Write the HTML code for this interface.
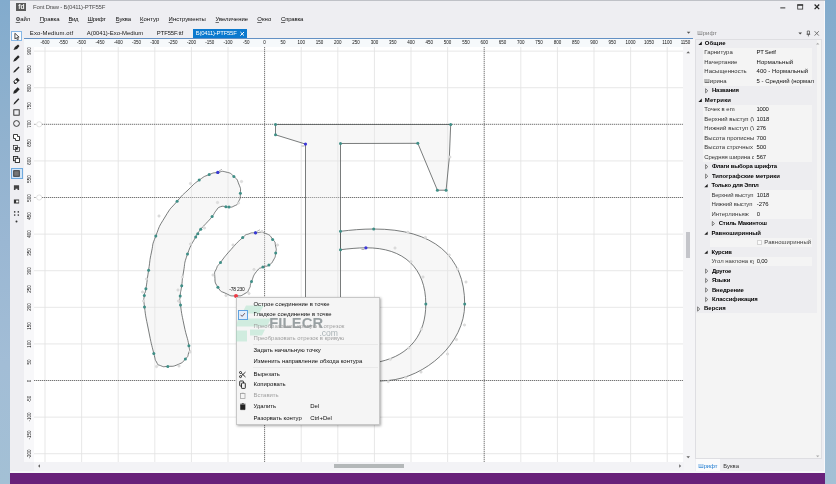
<!DOCTYPE html><html lang="ru"><head><meta charset="utf-8"><title>Font Draw - Б(0411)-PTF55F</title><style>
html,body{margin:0;padding:0}
body{width:836px;height:484px;overflow:hidden;position:relative;background:linear-gradient(to bottom,#82abcd 0%,#8fb1ce 25%,#9ab7d3 50%,#a2bdd6 75%,#a3c0d5 100%);font-family:"Liberation Sans", sans-serif;}
#win{position:absolute;left:10px;top:1px;width:815px;height:483px;background:#eeeef2;overflow:hidden}
.abs,.t,.ti{position:absolute}
.t{white-space:nowrap;line-height:1;}
#all{position:absolute;left:0;top:0;width:836px;height:484px;will-change:transform}
.t u{text-decoration-thickness:0.5px;text-underline-offset:0.5px;text-decoration-color:rgba(0,0,0,0.55)}
#cv{position:absolute;left:34px;top:47px}
</style></head><body>
<div id="all">
<div class="abs" style="left:10px;top:0;width:815px;height:1px;background:#bfc1c7"></div>
<div class="abs" style="left:10px;top:1px;width:815px;height:483px;background:#eeeef2"></div>
<div class="abs" style="left:823.5px;top:1px;width:1.5px;height:472px;background:#f8f8fb"></div>
<div class="abs" style="left:16.4px;top:3.2px;width:9.6px;height:7.5px;background:#5a5a5a"></div>
<div class="t" style="left:18.3px;top:3.6px;font-size:6.6px;font-weight:bold;color:#f4f4f4;letter-spacing:-0.1px">fd</div>
<svg class="abs" style="left:776px;top:1px" width="48" height="14" viewBox="776 1 48 14"><path d="M780.3 7.9h5" stroke="#333" stroke-width="1"/><rect x="797.7" y="4.9" width="5" height="4.2" fill="none" stroke="#333" stroke-width="0.8"/><path d="M797.3 5h5.8" stroke="#333" stroke-width="1.4"/><path d="M814.6 4.5l4.6 4.6m0 -4.6l-4.6 4.6" stroke="#222" stroke-width="1.2"/></svg>
<div class="abs" style="left:193px;top:29.2px;width:54.3px;height:9.3px;background:#0b79ce"></div>
<div class="abs" style="left:23.6px;top:37.9px;width:669.4px;height:0.9px;background:#6390c4"></div>
<svg class="abs" style="left:238px;top:30px" width="8" height="8" viewBox="0 0 8 8"><path d="M2.4 2l3.6 3.6m0 -3.6l-3.6 3.6" stroke="#fff" stroke-width="1"/></svg>
<svg class="abs" style="left:685px;top:30px" width="8" height="6" viewBox="0 0 8 6"><path d="M1.8 1.8h3.6l-1.8 2z" fill="#555"/></svg>
<div class="abs" style="left:10.8px;top:31.3px;width:11.4px;height:10px;background:#fbfcfe;border:0.6px solid #86b7e6;box-sizing:border-box"></div>
<div class="abs" style="left:10.8px;top:168.3px;width:11.8px;height:11.2px;background:#d3e5f6;border:0.7px solid #6ea9de;box-sizing:border-box"></div>
<svg class="ti" style="left:12.2px;top:32.1px" width="9" height="9" viewBox="-4.5 -4.5 9 9"><path d="M-1.6 -3.2L-1.6 2.4L-0.2 1.2L0.9 3.3L1.9 2.8L0.9 0.8L2.6 0.6Z" fill="#fff" stroke="#262626" stroke-width="0.8" stroke-linejoin="round"/></svg>
<svg class="ti" style="left:12.2px;top:42.9px" width="9" height="9" viewBox="-4.5 -4.5 9 9"><path d="M-3 2.6L-1.6 -0.6L1.6 -3L3 -1.6L0.6 1.6Z" fill="#262626"/></svg>
<svg class="ti" style="left:12.2px;top:53.9px" width="9" height="9" viewBox="-4.5 -4.5 9 9"><path d="M-3.3 3.3L-2.2 0.6L1.6 -3.2L3.2 -1.6L-0.6 2.2Z" fill="#262626"/></svg>
<svg class="ti" style="left:12.2px;top:64.9px" width="9" height="9" viewBox="-4.5 -4.5 9 9"><path d="M-3.2 3.2L-2.6 1.4L2 -3L3 -2L-1.4 2.6Z" fill="#262626"/></svg>
<svg class="ti" style="left:12.2px;top:76.0px" width="9" height="9" viewBox="-4.5 -4.5 9 9"><path d="M-3.2 1L0.6 -2.8L3.2 -0.2L-0.6 3.4L-2 3.4Z" fill="#262626"/><path d="M-2.2 1.1L-0.6 -0.5L0.9 1L-0.7 2.6Z" fill="#fff"/></svg>
<svg class="ti" style="left:12.2px;top:86.1px" width="9" height="9" viewBox="-4.5 -4.5 9 9"><path d="M-3.3 3.3L-2.6 0.4L1.2 -3.2L3.2 -1.2L-0.4 2.6Z" fill="#262626"/></svg>
<svg class="ti" style="left:12.2px;top:97.0px" width="9" height="9" viewBox="-4.5 -4.5 9 9"><path d="M-3 3.2L-2.4 1.2L1.8 -3.2L2.8 -2.2L-1.4 2.2Z" fill="#262626"/></svg>
<svg class="ti" style="left:12.2px;top:108.1px" width="9" height="9" viewBox="-4.5 -4.5 9 9"><rect x="-2.7" y="-2.7" width="5.4" height="5.4" fill="none" stroke="#262626" stroke-width="0.9"/></svg>
<svg class="ti" style="left:12.2px;top:119.3px" width="9" height="9" viewBox="-4.5 -4.5 9 9"><circle r="2.9" fill="none" stroke="#262626" stroke-width="0.9"/></svg>
<svg class="ti" style="left:12.2px;top:132.9px" width="9" height="9" viewBox="-4.5 -4.5 9 9"><path d="M-3 -3H1V-1H3V3H-1V1H-3Z" fill="#fff" stroke="#262626" stroke-width="0.9" stroke-linejoin="round"/></svg>
<svg class="ti" style="left:12.2px;top:144.0px" width="9" height="9" viewBox="-4.5 -4.5 9 9"><rect x="-3" y="-3" width="4" height="4" fill="none" stroke="#262626" stroke-width="0.7"/><rect x="-1" y="-1" width="4" height="4" fill="none" stroke="#262626" stroke-width="0.7"/><rect x="-0.6" y="-0.6" width="1.4" height="1.4" fill="#262626"/></svg>
<svg class="ti" style="left:12.2px;top:155.2px" width="9" height="9" viewBox="-4.5 -4.5 9 9"><rect x="-3" y="-3" width="4.2" height="4.2" fill="none" stroke="#262626" stroke-width="0.9"/><rect x="-1.2" y="-1.2" width="4.2" height="4.2" fill="#fff" stroke="#262626" stroke-width="0.9"/></svg>
<svg class="ti" style="left:12.2px;top:169.4px" width="9" height="9" viewBox="-4.5 -4.5 9 9"><rect x="-2.8" y="-2.8" width="5.6" height="5.6" fill="#777" stroke="#333" stroke-width="0.9"/></svg>
<svg class="ti" style="left:12.2px;top:182.9px" width="9" height="9" viewBox="-4.5 -4.5 9 9"><path d="M-2.6 -2.2H2.6V2.6H1V1.2H-1V2.6H-2.6Z" fill="#444"/></svg>
<svg class="ti" style="left:12.2px;top:196.8px" width="9" height="9" viewBox="-4.5 -4.5 9 9"><rect x="-2.6" y="-2" width="5.2" height="4" fill="#333"/><rect x="-0.4" y="-1" width="2.4" height="2" fill="#fff"/></svg>
<svg class="ti" style="left:12.2px;top:208.5px" width="9" height="9" viewBox="-4.5 -4.5 9 9"><g fill="#333"><circle cx="-1.8" cy="-1.6" r="0.8"/><circle cx="1.8" cy="-1.6" r="0.8"/><circle cx="-1.8" cy="1.6" r="0.8"/><circle cx="1.8" cy="1.6" r="0.8"/></g></svg>
<svg class="ti" style="left:12.2px;top:216.8px" width="9" height="9" viewBox="-4.5 -4.5 9 9"><circle r="1" fill="#333"/></svg>
<div class="abs" style="left:23.6px;top:38.8px;width:669.4px;height:8.2px;background:#f6f9fb"></div>
<div class="abs" style="left:33px;top:46.6px;width:651px;height:0;border-top:0.7px dotted #999"></div>
<div class="abs" style="left:23.6px;top:47px;width:10.4px;height:415px;background:#f8f8fa"></div>
<div class="abs" style="left:33.6px;top:47px;width:0;height:415px;border-left:0.7px dotted #999"></div>
<div class="t" style="left:19.6px;top:450.7px;width:20px;height:6px;text-align:center;font-size:4.5px;line-height:6px;color:#111;transform:rotate(-90deg)">-200</div>
<div class="t" style="left:19.6px;top:432.4px;width:20px;height:6px;text-align:center;font-size:4.5px;line-height:6px;color:#111;transform:rotate(-90deg)">-150</div>
<div class="t" style="left:19.6px;top:414.1px;width:20px;height:6px;text-align:center;font-size:4.5px;line-height:6px;color:#111;transform:rotate(-90deg)">-100</div>
<div class="t" style="left:19.6px;top:395.8px;width:20px;height:6px;text-align:center;font-size:4.5px;line-height:6px;color:#111;transform:rotate(-90deg)">-50</div>
<div class="t" style="left:19.6px;top:377.5px;width:20px;height:6px;text-align:center;font-size:4.5px;line-height:6px;color:#111;transform:rotate(-90deg)">0</div>
<div class="t" style="left:19.6px;top:359.2px;width:20px;height:6px;text-align:center;font-size:4.5px;line-height:6px;color:#111;transform:rotate(-90deg)">50</div>
<div class="t" style="left:19.6px;top:340.9px;width:20px;height:6px;text-align:center;font-size:4.5px;line-height:6px;color:#111;transform:rotate(-90deg)">100</div>
<div class="t" style="left:19.6px;top:322.6px;width:20px;height:6px;text-align:center;font-size:4.5px;line-height:6px;color:#111;transform:rotate(-90deg)">150</div>
<div class="t" style="left:19.6px;top:304.3px;width:20px;height:6px;text-align:center;font-size:4.5px;line-height:6px;color:#111;transform:rotate(-90deg)">200</div>
<div class="t" style="left:19.6px;top:286.0px;width:20px;height:6px;text-align:center;font-size:4.5px;line-height:6px;color:#111;transform:rotate(-90deg)">250</div>
<div class="t" style="left:19.6px;top:267.7px;width:20px;height:6px;text-align:center;font-size:4.5px;line-height:6px;color:#111;transform:rotate(-90deg)">300</div>
<div class="t" style="left:19.6px;top:249.4px;width:20px;height:6px;text-align:center;font-size:4.5px;line-height:6px;color:#111;transform:rotate(-90deg)">350</div>
<div class="t" style="left:19.6px;top:231.1px;width:20px;height:6px;text-align:center;font-size:4.5px;line-height:6px;color:#111;transform:rotate(-90deg)">400</div>
<div class="t" style="left:19.6px;top:212.8px;width:20px;height:6px;text-align:center;font-size:4.5px;line-height:6px;color:#111;transform:rotate(-90deg)">450</div>
<div class="t" style="left:19.6px;top:194.5px;width:20px;height:6px;text-align:center;font-size:4.5px;line-height:6px;color:#111;transform:rotate(-90deg)">500</div>
<div class="t" style="left:19.6px;top:176.2px;width:20px;height:6px;text-align:center;font-size:4.5px;line-height:6px;color:#111;transform:rotate(-90deg)">550</div>
<div class="t" style="left:19.6px;top:157.9px;width:20px;height:6px;text-align:center;font-size:4.5px;line-height:6px;color:#111;transform:rotate(-90deg)">600</div>
<div class="t" style="left:19.6px;top:139.6px;width:20px;height:6px;text-align:center;font-size:4.5px;line-height:6px;color:#111;transform:rotate(-90deg)">650</div>
<div class="t" style="left:19.6px;top:121.3px;width:20px;height:6px;text-align:center;font-size:4.5px;line-height:6px;color:#111;transform:rotate(-90deg)">700</div>
<div class="t" style="left:19.6px;top:103.0px;width:20px;height:6px;text-align:center;font-size:4.5px;line-height:6px;color:#111;transform:rotate(-90deg)">750</div>
<div class="t" style="left:19.6px;top:84.7px;width:20px;height:6px;text-align:center;font-size:4.5px;line-height:6px;color:#111;transform:rotate(-90deg)">800</div>
<div class="t" style="left:19.6px;top:66.4px;width:20px;height:6px;text-align:center;font-size:4.5px;line-height:6px;color:#111;transform:rotate(-90deg)">850</div>
<div class="t" style="left:19.6px;top:48.1px;width:20px;height:6px;text-align:center;font-size:4.5px;line-height:6px;color:#111;transform:rotate(-90deg)">900</div>
<svg id="cv" width="650" height="415" viewBox="34 47 650 415">
<rect x="34" y="47" width="650" height="415" fill="#fff"/>
<path d="M45.0 47V462M81.6 47V462M118.2 47V462M154.8 47V462M191.4 47V462M228.0 47V462M301.2 47V462M337.8 47V462M374.4 47V462M411.0 47V462M447.6 47V462M520.8 47V462M557.4 47V462M594.0 47V462M630.6 47V462M667.2 47V462M34 453.7H684M34 417.1H684M34 343.9H684M34 307.3H684M34 270.7H684M34 234.1H684M34 160.9H684M34 87.7H684M34 51.1H684" stroke="#e3e3e3" stroke-width="0.85" fill="none"/>
<path d="M264.6 47V462M484.2 47V462M34 380.5H684M42 197.5H684M42 124.3H684" stroke="#505050" stroke-width="0.8" stroke-dasharray="1.3 0.7" fill="none"/>
<g fill="#e9e9e9" fill-opacity="0.36" stroke="#4d5152" stroke-width="0.75" stroke-linejoin="round">
<path d="M217.8 172.4 C223.4 171.5 220.5 170.6 225.9 172.0 C231.3 173.4 229.6 172.5 233.9 176.5 C238.2 180.5 236.6 178.4 238.8 184.0 C241.0 189.6 240.6 187.2 240.4 193.2 C240.2 199.2 240.5 197.8 238.3 202.1 C236.1 206.4 237.0 204.4 233.9 206.1 C230.8 207.8 231.7 206.9 229.0 207.1 C226.3 207.3 228.8 206.9 225.9 206.8 C223.0 206.7 223.6 205.5 220.3 206.8 C217.0 208.1 218.7 207.5 216.0 210.8 C213.3 214.1 215.4 212.4 212.1 216.6 C208.8 220.8 209.8 219.3 206.0 223.5 C202.2 227.7 203.4 225.8 200.7 229.2 C198.0 232.6 199.5 231.1 197.8 233.7 C196.1 236.3 199.1 230.1 195.7 236.9 C192.3 243.7 191.6 242.4 187.5 254.1 C183.4 265.8 185.4 261.4 183.5 272.0 C181.6 282.6 182.8 277.8 181.7 285.8 C180.6 293.8 180.6 289.6 180.2 296.0 C179.8 302.4 179.2 295.3 180.5 305.0 C181.8 314.7 181.2 311.4 184.0 325.0 C186.8 338.6 187.4 336.4 188.9 345.7 C190.4 355.0 189.8 348.6 188.6 353.0 C187.4 357.4 188.9 355.2 185.4 359.0 C181.9 362.8 183.9 362.0 178.0 364.5 C172.1 367.0 173.6 366.0 167.8 366.4 C162.0 366.8 164.3 367.1 160.5 365.6 C156.7 364.1 158.7 366.1 156.5 362.0 C154.3 357.9 156.5 364.1 153.8 353.4 C151.1 342.7 151.6 345.5 148.5 330.0 C145.4 314.5 145.9 318.4 144.5 306.9 C143.1 295.4 143.8 301.5 144.3 295.5 C144.8 289.5 144.5 297.2 145.9 288.8 C147.3 280.4 146.7 282.5 148.6 270.2 C150.5 257.9 149.1 263.4 151.5 252.0 C153.9 240.6 151.3 247.7 155.8 236.0 C160.3 224.3 157.9 228.6 165.0 217.0 C172.1 205.4 169.4 210.3 177.1 201.3 C184.8 192.3 180.6 197.1 188.0 190.0 C195.4 182.9 192.1 185.2 199.2 180.1 C206.3 175.0 203.0 177.2 209.2 174.6 C215.4 172.0 212.2 173.3 217.8 172.4Z"/>
<path d="M255.5 232.8 C261.2 232.6 259.7 231.2 265.5 233.4 C271.3 235.6 269.4 235.2 272.8 239.4 C276.2 243.6 274.6 241.4 275.6 246.0 C276.6 250.6 276.4 248.4 275.7 253.1 C275.0 257.8 275.8 256.0 273.5 260.0 C271.2 264.0 272.4 262.7 268.9 265.1 C265.4 267.5 267.0 265.0 262.9 267.1 C258.8 269.2 260.3 266.7 256.5 271.5 C252.7 276.3 253.9 275.9 251.5 281.6 C249.1 287.3 251.5 284.5 249.3 288.5 C247.1 292.5 249.4 291.0 245.0 293.5 C240.6 296.0 242.3 295.9 236.0 295.9 C229.7 295.9 232.0 296.4 226.0 293.5 C220.0 290.6 221.6 292.9 217.9 287.2 C214.2 281.5 215.3 282.7 214.8 276.5 C214.3 270.3 214.6 273.2 216.5 268.5 C218.4 263.8 215.7 268.7 220.5 262.4 C225.3 256.1 223.6 257.8 231.0 249.5 C238.4 241.2 236.9 242.8 242.7 237.6 C248.5 232.4 244.2 235.6 248.5 234.0 C252.8 232.4 249.8 233.0 255.5 232.8Z"/>
<path d="M275.5 124.5 L450.7 124.5 Q450.3 157 446.1 190.2 L437.4 190.2 L417.8 143.3 L340.5 143.5 L340.5 381 L305.5 381 L305.5 144.1 L275.5 134.8Z"/>
<path d="M340.5 231.3 C351 230 362 229 373.7 229 C433.7 229 464.7 256.1 464.7 304.1 C464.7 344.1 425 377.5 388.2 380.5 C372 382.3 355 381 340.5 381 L340.5 363 C350 363 365 364.5 380 361.7 C410 355 425.8 334.1 425.8 304.1 C425.8 268.1 403.9 247.6 365.9 247.8 C357 247.9 349 248.7 340.5 249.7 Z"/>
</g>
<circle cx="39.2" cy="197.5" r="2.6" fill="#fff" stroke="#d0d0d0" stroke-width="0.6"/><path d="M31.6 197.5h4.2" stroke="#777" stroke-width="0.6"/>
<circle cx="39.2" cy="124.3" r="2.6" fill="#fff" stroke="#d0d0d0" stroke-width="0.6"/><path d="M31.6 124.3h4.2" stroke="#777" stroke-width="0.6"/>
<g fill="#dedede" stroke="#cfcfcf" stroke-width="0.4">
<circle cx="449.9" cy="157.1" r="1.25"/>
<circle cx="407.9" cy="232.3" r="1.25"/>
<circle cx="425.4" cy="237.5" r="1.25"/>
<circle cx="449.2" cy="255.0" r="1.25"/>
<circle cx="457.5" cy="268.9" r="1.25"/>
<circle cx="466.0" cy="282.0" r="1.25"/>
<circle cx="411.0" cy="261.7" r="1.25"/>
<circle cx="423.0" cy="277.0" r="1.25"/>
<circle cx="395.0" cy="248.0" r="1.25"/>
<circle cx="464.5" cy="325.0" r="1.25"/>
<circle cx="456.4" cy="339.6" r="1.25"/>
<circle cx="447.5" cy="354.0" r="1.25"/>
<circle cx="421.0" cy="372.0" r="1.25"/>
<circle cx="405.8" cy="377.5" r="1.25"/>
<circle cx="388.2" cy="381.5" r="1.25"/>
<circle cx="421.3" cy="329.3" r="1.25"/>
<circle cx="408.9" cy="347.9" r="1.25"/>
<circle cx="390.3" cy="359.3" r="1.25"/>
<circle cx="241.5" cy="181.5" r="1.25"/>
<circle cx="238.5" cy="203.0" r="1.25"/>
<circle cx="217.5" cy="202.5" r="1.25"/>
<circle cx="159.0" cy="216.0" r="1.25"/>
<circle cx="190.5" cy="183.5" r="1.25"/>
<circle cx="204.5" cy="228.0" r="1.25"/>
<circle cx="190.5" cy="244.0" r="1.25"/>
<circle cx="146.5" cy="279.0" r="1.25"/>
<circle cx="182.5" cy="277.0" r="1.25"/>
<circle cx="156.5" cy="366.5" r="1.25"/>
<circle cx="179.0" cy="366.0" r="1.25"/>
<circle cx="190.0" cy="352.0" r="1.25"/>
<circle cx="142.5" cy="292.0" r="1.25"/>
<circle cx="178.0" cy="290.0" r="1.25"/>
<circle cx="143.5" cy="301.0" r="1.25"/>
<circle cx="178.5" cy="301.0" r="1.25"/>
<circle cx="262.0" cy="231.5" r="1.25"/>
<circle cx="277.5" cy="245.0" r="1.25"/>
<circle cx="254.0" cy="269.5" r="1.25"/>
<circle cx="249.0" cy="293.5" r="1.25"/>
<circle cx="226.0" cy="295.5" r="1.25"/>
<circle cx="213.0" cy="275.0" r="1.25"/>
<circle cx="233.0" cy="245.0" r="1.25"/>
</g>
<g fill="#3f8f87">
<circle cx="217.8" cy="172.4" r="1.5"/>
<circle cx="233.9" cy="176.5" r="1.5"/>
<circle cx="240.4" cy="193.2" r="1.5"/>
<circle cx="229.0" cy="207.1" r="1.5"/>
<circle cx="225.9" cy="206.8" r="1.5"/>
<circle cx="212.1" cy="216.6" r="1.5"/>
<circle cx="200.7" cy="229.2" r="1.5"/>
<circle cx="197.8" cy="233.7" r="1.5"/>
<circle cx="195.7" cy="236.9" r="1.5"/>
<circle cx="187.5" cy="254.1" r="1.5"/>
<circle cx="181.7" cy="285.8" r="1.5"/>
<circle cx="180.2" cy="296.0" r="1.5"/>
<circle cx="180.5" cy="305.0" r="1.5"/>
<circle cx="188.9" cy="345.7" r="1.5"/>
<circle cx="185.4" cy="359.0" r="1.5"/>
<circle cx="167.8" cy="366.4" r="1.5"/>
<circle cx="153.8" cy="353.4" r="1.5"/>
<circle cx="144.5" cy="306.9" r="1.5"/>
<circle cx="144.3" cy="295.5" r="1.5"/>
<circle cx="145.9" cy="288.8" r="1.5"/>
<circle cx="148.6" cy="270.2" r="1.5"/>
<circle cx="155.8" cy="236.0" r="1.5"/>
<circle cx="177.1" cy="201.3" r="1.5"/>
<circle cx="199.2" cy="180.1" r="1.5"/>
<circle cx="209.2" cy="174.6" r="1.5"/>
<circle cx="255.5" cy="232.8" r="1.5"/>
<circle cx="272.6" cy="239.6" r="1.5"/>
<circle cx="275.7" cy="253.1" r="1.5"/>
<circle cx="268.9" cy="265.1" r="1.5"/>
<circle cx="262.9" cy="267.1" r="1.5"/>
<circle cx="251.5" cy="281.6" r="1.5"/>
<circle cx="217.9" cy="287.2" r="1.5"/>
<circle cx="220.5" cy="262.4" r="1.5"/>
<circle cx="242.7" cy="237.6" r="1.5"/>
<circle cx="275.5" cy="124.5" r="1.5"/>
<circle cx="450.7" cy="124.5" r="1.5"/>
<circle cx="446.1" cy="190.2" r="1.5"/>
<circle cx="437.4" cy="190.2" r="1.5"/>
<circle cx="417.8" cy="143.3" r="1.5"/>
<circle cx="340.5" cy="143.5" r="1.5"/>
<circle cx="275.5" cy="134.8" r="1.5"/>
<circle cx="340.5" cy="231.3" r="1.5"/>
<circle cx="373.7" cy="229.0" r="1.5"/>
<circle cx="464.7" cy="304.1" r="1.5"/>
<circle cx="425.8" cy="304.1" r="1.5"/>
<circle cx="340.5" cy="249.7" r="1.5"/>
</g>
<g fill="#3b36d8">
<circle cx="217.8" cy="172.4" r="1.6"/>
<circle cx="255.5" cy="232.8" r="1.6"/>
<circle cx="305.5" cy="144.1" r="1.6"/>
<circle cx="365.9" cy="247.8" r="1.6"/>
</g>
<path d="M219 171l3-1.7M257 231.4l3-1.7M301.5 146h3M361.5 249.5h3" stroke="#666" stroke-width="0.5" fill="none"/>
<circle cx="236" cy="295.9" r="2" fill="#ee3b46"/>
</svg>
<div class="abs" style="left:683px;top:39px;width:12.3px;height:432px;background:#f5f5f7"></div>
<div class="abs" style="left:685.7px;top:231.7px;width:4.8px;height:26.8px;background:#c4c5ca"></div>
<div class="abs" style="left:34px;top:462px;width:650px;height:9.3px;background:#f3f3f6"></div>
<div class="abs" style="left:334.4px;top:463.9px;width:70px;height:4.3px;background:#b4b8b9"></div>
<svg class="abs" style="left:676px;top:47px" width="17" height="424" viewBox="676 47 17 424"><path d="M686.4 53.2h3.6l-1.8 -2z M686.4 456.3h3.6l-1.8 2z M679.2 464.2v3.6l2-1.8z" fill="#666"/></svg>
<svg class="abs" style="left:33px;top:462px" width="12" height="9" viewBox="33 462 12 9"><path d="M40 464.2v3.6l-2-1.8z" fill="#666"/></svg>
<div class="abs" style="left:10px;top:471.3px;width:815px;height:2px;background:#f6f6f9"></div>
<div class="abs" style="left:695.3px;top:39px;width:127px;height:420px;background:#f4f4f4;border:0.6px solid #dedee2;box-sizing:border-box"></div>
<div class="abs" style="left:696px;top:39.6px;width:121px;height:273.5px;background:#ededf0"></div>
<div class="abs" style="left:720px;top:32.4px;width:76px;height:2.4px;background-image:radial-gradient(circle,#bdbdc4 0.35px,transparent 0.5px);background-size:2px 1.2px"></div>
<svg class="abs" style="left:796px;top:29px" width="26" height="9" viewBox="796 29 26 9"><path d="M798.4 32.6h3.6l-1.8 2z" fill="#444"/><path d="M807.3 31h2.2v3.2h-2.2zM806.6 34.3h3.6M808.4 34.4v2" stroke="#444" stroke-width="0.7" fill="none"/><path d="M814.6 31.2l4.2 4.4m0 -4.4l-4.2 4.4" stroke="#666" stroke-width="0.9"/></svg>
<div class="abs" style="left:702.5px;top:48.05px;width:109.0px;height:9.54px;background:#f4f4f4"></div>
<div class="abs" style="left:702.5px;top:57.54px;width:109.0px;height:9.54px;background:#f4f4f4"></div>
<div class="abs" style="left:702.5px;top:67.02px;width:109.0px;height:9.54px;background:#f4f4f4"></div>
<div class="abs" style="left:702.5px;top:76.51px;width:109.0px;height:9.54px;background:#f4f4f4"></div>
<div class="abs" style="left:702.5px;top:104.98px;width:109.0px;height:9.54px;background:#f4f4f4"></div>
<div class="abs" style="left:702.5px;top:114.47px;width:109.0px;height:9.54px;background:#f4f4f4"></div>
<div class="abs" style="left:702.5px;top:123.96px;width:109.0px;height:9.54px;background:#f4f4f4"></div>
<div class="abs" style="left:702.5px;top:133.45px;width:109.0px;height:9.54px;background:#f4f4f4"></div>
<div class="abs" style="left:702.5px;top:142.94px;width:109.0px;height:9.54px;background:#f4f4f4"></div>
<div class="abs" style="left:702.5px;top:152.44px;width:109.0px;height:9.54px;background:#f4f4f4"></div>
<div class="abs" style="left:709.5px;top:190.39px;width:102.0px;height:9.54px;background:#f4f4f4"></div>
<div class="abs" style="left:709.5px;top:199.88px;width:102.0px;height:9.54px;background:#f4f4f4"></div>
<div class="abs" style="left:709.5px;top:209.38px;width:102.0px;height:9.54px;background:#f4f4f4"></div>
<div class="abs" style="left:709.5px;top:237.84px;width:102.0px;height:9.54px;background:#f4f4f4"></div>
<div class="abs" style="left:709.5px;top:256.82px;width:102.0px;height:9.54px;background:#f4f4f4"></div>
<div class="abs" style="left:756.7px;top:240.1px;width:5px;height:5px;background:#fbfbfb;border:0.5px solid #d4d4d4;box-sizing:border-box"></div>
<svg class="abs" style="left:695px;top:39px" width="128" height="420" viewBox="695 39 128 420"><path d="M698.4 45.0l3.4 -3.4v3.4z" fill="#1a1a1a"/><path d="M705.6 88.7l2.2 2.1l-2.2 2.1z" fill="#f7f7f7" stroke="#333" stroke-width="0.6"/><path d="M698.4 101.9l3.4 -3.4v3.4z" fill="#1a1a1a"/><path d="M705.6 164.6l2.2 2.1l-2.2 2.1z" fill="#f7f7f7" stroke="#333" stroke-width="0.6"/><path d="M705.6 174.1l2.2 2.1l-2.2 2.1z" fill="#f7f7f7" stroke="#333" stroke-width="0.6"/><path d="M704.3 187.3l3.4 -3.4v3.4z" fill="#1a1a1a"/><path d="M712.3 221.5l2.2 2.1l-2.2 2.1z" fill="#f7f7f7" stroke="#333" stroke-width="0.6"/><path d="M704.3 234.8l3.4 -3.4v3.4z" fill="#1a1a1a"/><path d="M704.3 253.8l3.4 -3.4v3.4z" fill="#1a1a1a"/><path d="M705.6 269.0l2.2 2.1l-2.2 2.1z" fill="#f7f7f7" stroke="#333" stroke-width="0.6"/><path d="M705.6 278.4l2.2 2.1l-2.2 2.1z" fill="#f7f7f7" stroke="#333" stroke-width="0.6"/><path d="M705.6 287.9l2.2 2.1l-2.2 2.1z" fill="#f7f7f7" stroke="#333" stroke-width="0.6"/><path d="M705.6 297.4l2.2 2.1l-2.2 2.1z" fill="#f7f7f7" stroke="#333" stroke-width="0.6"/><path d="M697.6 306.9l2.2 2.1l-2.2 2.1z" fill="#f7f7f7" stroke="#333" stroke-width="0.6"/><path d="M816 44.6h3.4l-1.7 -1.8z M816 455.4h3.4l-1.7 1.8z" fill="#aaa"/></svg>
<div class="abs" style="left:696px;top:458.5px;width:24px;height:12px;background:#fbfbfc"></div>
<div class="abs" style="left:10px;top:473.2px;width:815px;height:11px;background:#68217a"></div>
<div class="abs" id="menu" style="left:236.2px;top:296.8px;width:144px;height:128.4px;background:#f5f5f5;border:0.6px solid #c8c8c8;box-sizing:border-box;box-shadow:1.2px 1.2px 2.5px rgba(0,0,0,0.35)"></div>
<div class="abs" style="left:253px;top:343.8px;width:125px;height:0.7px;background:#e9e9e9"></div>
<div class="abs" style="left:253px;top:367.3px;width:125px;height:0.7px;background:#e9e9e9"></div>
<svg class="abs" style="left:234px;top:305px" width="40" height="38" viewBox="234 305 40 38"><g fill="#9fe0c2" opacity="0.42"><path d="M246 305.5h18l-5 8h-17z"/><path d="M238 318.5h33l-4 8h-31z"/><path d="M236 330.5h11v11h-11z"/><path d="M250 329.5h15l-3 6h-12z"/></g></svg>
<div class="t" style="left:269.2px;top:315.9px;font-size:14.8px;font-weight:bold;color:rgba(95,108,112,0.62);letter-spacing:0.1px">FILECR</div>
<div class="t" style="left:319.4px;top:328.9px;font-size:8.6px;color:rgba(120,135,140,0.6)">.com</div>
<div class="abs" style="left:237.6px;top:310.1px;width:10.2px;height:9.6px;background:#e3eefa;border:0.7px solid #5fa2e0;box-sizing:border-box"></div>
<svg class="abs" style="left:236px;top:309px" width="16" height="114" viewBox="236 309 16 114"><path d="M240.6 314.8l1.5 1.6l2.7 -3.2" stroke="#53323a" stroke-width="0.8" fill="none"/><g stroke="#1c1c1c" stroke-width="0.9" fill="none"><path d="M241.3 373.1l4.2 3.9M241.3 376l4.2 -3.9"/><circle cx="240.5" cy="372.5" r="1"/><circle cx="240.5" cy="376.6" r="1"/></g><g stroke="#1c1c1c" stroke-width="0.9" fill="#f5f5f5"><rect x="239.7" y="381" width="3.8" height="5" rx="0.6"/><rect x="241.5" y="383" width="3.8" height="5.4" rx="0.6"/></g><g stroke="#9a9a9a" stroke-width="0.7" fill="none"><rect x="240.4" y="393.4" width="4.6" height="5"/><path d="M241.6 393.2h2.2"/></g><path d="M240.6 405h4.4v4.6h-4.4zM240 404.2h5.6M241.8 403.6h2" stroke="#222" stroke-width="0.7" fill="#222"/></svg>
<div class="t" id="t0" style="left:33.00px;top:4.66px;font-size:5.95px;color:#4c4c4c;letter-spacing:-0.177px;">Font Draw - Б(0411)-PTF55F</div>
<div class="t" id="t1" style="left:15.70px;top:17.26px;font-size:5.95px;color:#0c0c0c;letter-spacing:-0.052px;"><u>Ф</u>айл</div>
<div class="t" id="t2" style="left:39.70px;top:17.26px;font-size:5.95px;color:#0c0c0c;letter-spacing:-0.063px;"><u>П</u>равка</div>
<div class="t" id="t3" style="left:68.40px;top:17.26px;font-size:5.95px;color:#0c0c0c;letter-spacing:-0.383px;"><u>В</u>ид</div>
<div class="t" id="t4" style="left:87.50px;top:17.26px;font-size:5.95px;color:#0c0c0c;letter-spacing:-0.269px;"><u>Ш</u>рифт</div>
<div class="t" id="t5" style="left:115.80px;top:17.26px;font-size:5.95px;color:#0c0c0c;letter-spacing:-0.110px;"><u>Б</u>уква</div>
<div class="t" id="t6" style="left:140.00px;top:17.26px;font-size:5.95px;color:#0c0c0c;letter-spacing:0.042px;"><u>К</u>онтур</div>
<div class="t" id="t7" style="left:168.60px;top:17.26px;font-size:5.95px;color:#0c0c0c;letter-spacing:0.023px;"><u>И</u>нструменты</div>
<div class="t" id="t8" style="left:215.50px;top:17.26px;font-size:5.95px;color:#0c0c0c;letter-spacing:-0.023px;"><u>У</u>величение</div>
<div class="t" id="t9" style="left:257.20px;top:17.26px;font-size:5.95px;color:#0c0c0c;letter-spacing:0.097px;"><u>О</u>кно</div>
<div class="t" id="t10" style="left:281.00px;top:17.26px;font-size:5.95px;color:#0c0c0c;letter-spacing:-0.159px;"><u>С</u>правка</div>
<div class="t" id="t11" style="left:29.80px;top:30.96px;font-size:5.95px;color:#161616;letter-spacing:0.137px;">Exo-Medium.otf</div>
<div class="t" id="t12" style="left:86.70px;top:30.96px;font-size:5.95px;color:#161616;letter-spacing:0.003px;">A(0041)-Exo-Medium</div>
<div class="t" id="t13" style="left:156.80px;top:30.96px;font-size:5.95px;color:#161616;letter-spacing:-0.119px;">PTF55F.ttf</div>
<div class="t" id="t14" style="left:195.80px;top:31.16px;font-size:5.95px;color:#ffffff;letter-spacing:-0.232px;">Б(0411)-PTF55F</div>
<div class="t" id="t15" style="left:697.30px;top:30.86px;font-size:5.95px;color:#777777;letter-spacing:0.031px;">Шрифт</div>
<div class="t" id="t16" style="left:698.30px;top:463.66px;font-size:5.95px;color:#1c7ad0;letter-spacing:-0.109px;">Шрифт</div>
<div class="t" id="t17" style="left:723.30px;top:463.66px;font-size:5.95px;color:#333333;letter-spacing:-0.007px;">Буква</div>
<div class="t" id="t18" style="left:704.80px;top:40.76px;font-size:5.95px;color:#000;font-weight:bold;letter-spacing:0.110px;">Общие</div>
<div class="t" id="t19" style="left:704.30px;top:50.25px;font-size:5.95px;color:#303030;letter-spacing:0.003px;width:50.10px;overflow:hidden;">Гарнитура</div>
<div class="t" id="t20" style="left:756.60px;top:50.25px;font-size:5.95px;color:#101010;letter-spacing:-0.305px;">PT Serif</div>
<div class="t" id="t21" style="left:704.30px;top:59.74px;font-size:5.95px;color:#303030;letter-spacing:0.021px;width:50.10px;overflow:hidden;">Начертание</div>
<div class="t" id="t22" style="left:756.60px;top:59.74px;font-size:5.95px;color:#101010;letter-spacing:0.090px;">Нормальный</div>
<div class="t" id="t23" style="left:704.30px;top:69.23px;font-size:5.95px;color:#303030;letter-spacing:0.067px;width:50.10px;overflow:hidden;">Насыщенность</div>
<div class="t" id="t24" style="left:756.60px;top:69.23px;font-size:5.95px;color:#101010;letter-spacing:0.038px;">400 - Нормальный</div>
<div class="t" id="t25" style="left:704.30px;top:78.72px;font-size:5.95px;color:#303030;letter-spacing:0.039px;width:50.10px;overflow:hidden;">Ширина</div>
<div class="t" id="t26" style="left:756.60px;top:78.72px;font-size:5.95px;color:#101010;letter-spacing:0.017px;">5 - Средний (нормал</div>
<div class="t" id="t27" style="left:711.90px;top:88.21px;font-size:5.95px;color:#000;font-weight:bold;letter-spacing:-0.150px;">Названия</div>
<div class="t" id="t28" style="left:704.80px;top:97.70px;font-size:5.95px;color:#000;font-weight:bold;letter-spacing:0.202px;">Метрики</div>
<div class="t" id="t29" style="left:704.30px;top:107.19px;font-size:5.95px;color:#303030;letter-spacing:0.037px;width:50.10px;overflow:hidden;">Точек в em</div>
<div class="t" id="t30" style="left:756.60px;top:107.19px;font-size:5.95px;color:#101010;letter-spacing:-0.355px;">1000</div>
<div class="t" id="t31" style="left:704.30px;top:116.68px;font-size:5.95px;color:#303030;letter-spacing:-0.008px;width:50.10px;overflow:hidden;">Верхний выступ (Windows)</div>
<div class="t" id="t32" style="left:756.60px;top:116.68px;font-size:5.95px;color:#101010;letter-spacing:-0.205px;">1018</div>
<div class="t" id="t33" style="left:704.30px;top:126.17px;font-size:5.95px;color:#303030;letter-spacing:0.117px;width:50.10px;overflow:hidden;">Нижний выступ (Windows)</div>
<div class="t" id="t34" style="left:756.60px;top:126.17px;font-size:5.95px;color:#101010;letter-spacing:-0.174px;">276</div>
<div class="t" id="t35" style="left:704.30px;top:135.66px;font-size:5.95px;color:#303030;letter-spacing:0.073px;width:50.10px;overflow:hidden;">Высота прописных</div>
<div class="t" id="t36" style="left:756.60px;top:135.66px;font-size:5.95px;color:#101010;letter-spacing:-0.107px;">700</div>
<div class="t" id="t37" style="left:704.30px;top:145.15px;font-size:5.95px;color:#303030;letter-spacing:0.053px;width:50.10px;overflow:hidden;">Высота строчных</div>
<div class="t" id="t38" style="left:756.60px;top:145.15px;font-size:5.95px;color:#101010;letter-spacing:-0.107px;">500</div>
<div class="t" id="t39" style="left:704.30px;top:154.64px;font-size:5.95px;color:#303030;letter-spacing:-0.070px;width:50.10px;overflow:hidden;">Средняя ширина символа</div>
<div class="t" id="t40" style="left:756.60px;top:154.64px;font-size:5.95px;color:#101010;letter-spacing:-0.174px;">567</div>
<div class="t" id="t41" style="left:711.90px;top:164.13px;font-size:5.95px;color:#000;font-weight:bold;letter-spacing:-0.159px;">Флаги выбора шрифта</div>
<div class="t" id="t42" style="left:711.90px;top:173.62px;font-size:5.95px;color:#000;font-weight:bold;letter-spacing:-0.009px;">Типографские метрики</div>
<div class="t" id="t43" style="left:711.40px;top:183.11px;font-size:5.95px;color:#000;font-weight:bold;letter-spacing:-0.190px;">Только для Эппл</div>
<div class="t" id="t44" style="left:711.40px;top:192.60px;font-size:5.95px;color:#3a3a3a;letter-spacing:-0.185px;width:43.00px;overflow:hidden;">Верхний выступ</div>
<div class="t" id="t45" style="left:756.70px;top:192.60px;font-size:5.95px;color:#101010;letter-spacing:-0.180px;">1018</div>
<div class="t" id="t46" style="left:711.40px;top:202.09px;font-size:5.95px;color:#3a3a3a;letter-spacing:-0.123px;width:43.00px;overflow:hidden;">Нижний выступ</div>
<div class="t" id="t47" style="left:756.70px;top:202.09px;font-size:5.95px;color:#101010;letter-spacing:-0.023px;">-276</div>
<div class="t" id="t48" style="left:711.40px;top:211.58px;font-size:5.95px;color:#3a3a3a;letter-spacing:0.041px;width:43.00px;overflow:hidden;">Интерлиньяж</div>
<div class="t" id="t49" style="left:756.70px;top:211.58px;font-size:5.95px;color:#101010;">0</div>
<div class="t" id="t50" style="left:718.70px;top:221.07px;font-size:5.95px;color:#000;font-weight:bold;letter-spacing:-0.119px;">Стиль Макинтош</div>
<div class="t" id="t51" style="left:711.40px;top:230.56px;font-size:5.95px;color:#000;font-weight:bold;letter-spacing:-0.018px;">Равноширинный</div>
<div class="t" id="t52" style="left:764.30px;top:240.05px;font-size:5.95px;color:#444;letter-spacing:0.096px;">Равноширинный</div>
<div class="t" id="t53" style="left:711.40px;top:249.54px;font-size:5.95px;color:#000;font-weight:bold;letter-spacing:-0.096px;">Курсив</div>
<div class="t" id="t54" style="left:711.40px;top:259.03px;font-size:5.95px;color:#3a3a3a;letter-spacing:0.019px;width:43.00px;overflow:hidden;">Угол наклона курсива</div>
<div class="t" id="t55" style="left:756.70px;top:259.03px;font-size:5.95px;color:#101010;letter-spacing:-0.191px;">0,00</div>
<div class="t" id="t56" style="left:711.90px;top:268.52px;font-size:5.95px;color:#000;font-weight:bold;letter-spacing:-0.184px;">Другое</div>
<div class="t" id="t57" style="left:711.90px;top:278.01px;font-size:5.95px;color:#000;font-weight:bold;letter-spacing:-0.124px;">Языки</div>
<div class="t" id="t58" style="left:711.90px;top:287.50px;font-size:5.95px;color:#000;font-weight:bold;letter-spacing:-0.058px;">Внедрение</div>
<div class="t" id="t59" style="left:711.90px;top:296.99px;font-size:5.95px;color:#000;font-weight:bold;letter-spacing:-0.080px;">Классификация</div>
<div class="t" id="t60" style="left:704.10px;top:306.48px;font-size:5.95px;color:#000;font-weight:bold;letter-spacing:-0.023px;">Версия</div>
<div class="t" id="t61" style="left:253.50px;top:301.66px;font-size:5.95px;color:#0c0c0c;">Острое соединение в точке</div>
<div class="t" id="t62" style="left:253.50px;top:312.46px;font-size:5.95px;color:#0c0c0c;">Гладкое соединение в точке</div>
<div class="t" id="t63" style="left:253.50px;top:324.26px;font-size:5.95px;color:#a0a0a0;">Преобразовать кривую в отрезок</div>
<div class="t" id="t64" style="left:253.50px;top:335.76px;font-size:5.95px;color:#a0a0a0;">Преобразовать отрезок в кривую</div>
<div class="t" id="t65" style="left:253.50px;top:348.16px;font-size:5.95px;color:#0c0c0c;">Задать начальную точку</div>
<div class="t" id="t66" style="left:253.50px;top:358.96px;font-size:5.95px;color:#0c0c0c;">Изменить направление обхода контура</div>
<div class="t" id="t67" style="left:253.50px;top:371.66px;font-size:5.95px;color:#0c0c0c;">Вырезать</div>
<div class="t" id="t68" style="left:253.50px;top:382.46px;font-size:5.95px;color:#0c0c0c;">Копировать</div>
<div class="t" id="t69" style="left:253.50px;top:393.36px;font-size:5.95px;color:#a0a0a0;">Вставить</div>
<div class="t" id="t70" style="left:253.50px;top:404.16px;font-size:5.95px;color:#0c0c0c;">Удалить</div>
<div class="t" id="t71" style="left:310.20px;top:404.16px;font-size:5.95px;color:#0c0c0c;">Del</div>
<div class="t" id="t72" style="left:253.50px;top:415.66px;font-size:5.95px;color:#0c0c0c;">Разорвать контур</div>
<div class="t" id="t73" style="left:310.20px;top:415.66px;font-size:5.95px;color:#0c0c0c;">Ctrl+Del</div>
<div class="t" id="t74" style="left:45.00px;top:40.88px;font-size:4.50px;color:#111;transform:translateX(-50%);">-600</div>
<div class="t" id="t75" style="left:63.30px;top:40.88px;font-size:4.50px;color:#111;transform:translateX(-50%);">-550</div>
<div class="t" id="t76" style="left:81.60px;top:40.88px;font-size:4.50px;color:#111;transform:translateX(-50%);">-500</div>
<div class="t" id="t77" style="left:99.90px;top:40.88px;font-size:4.50px;color:#111;transform:translateX(-50%);">-450</div>
<div class="t" id="t78" style="left:118.20px;top:40.88px;font-size:4.50px;color:#111;transform:translateX(-50%);">-400</div>
<div class="t" id="t79" style="left:136.50px;top:40.88px;font-size:4.50px;color:#111;transform:translateX(-50%);">-350</div>
<div class="t" id="t80" style="left:154.80px;top:40.88px;font-size:4.50px;color:#111;transform:translateX(-50%);">-300</div>
<div class="t" id="t81" style="left:173.10px;top:40.88px;font-size:4.50px;color:#111;transform:translateX(-50%);">-250</div>
<div class="t" id="t82" style="left:191.40px;top:40.88px;font-size:4.50px;color:#111;transform:translateX(-50%);">-200</div>
<div class="t" id="t83" style="left:209.70px;top:40.88px;font-size:4.50px;color:#111;transform:translateX(-50%);">-150</div>
<div class="t" id="t84" style="left:228.00px;top:40.88px;font-size:4.50px;color:#111;transform:translateX(-50%);">-100</div>
<div class="t" id="t85" style="left:246.30px;top:40.88px;font-size:4.50px;color:#111;transform:translateX(-50%);">-50</div>
<div class="t" id="t86" style="left:264.60px;top:40.88px;font-size:4.50px;color:#111;transform:translateX(-50%);">0</div>
<div class="t" id="t87" style="left:282.90px;top:40.88px;font-size:4.50px;color:#111;transform:translateX(-50%);">50</div>
<div class="t" id="t88" style="left:301.20px;top:40.88px;font-size:4.50px;color:#111;transform:translateX(-50%);">100</div>
<div class="t" id="t89" style="left:319.50px;top:40.88px;font-size:4.50px;color:#111;transform:translateX(-50%);">150</div>
<div class="t" id="t90" style="left:337.80px;top:40.88px;font-size:4.50px;color:#111;transform:translateX(-50%);">200</div>
<div class="t" id="t91" style="left:356.10px;top:40.88px;font-size:4.50px;color:#111;transform:translateX(-50%);">250</div>
<div class="t" id="t92" style="left:374.40px;top:40.88px;font-size:4.50px;color:#111;transform:translateX(-50%);">300</div>
<div class="t" id="t93" style="left:392.70px;top:40.88px;font-size:4.50px;color:#111;transform:translateX(-50%);">350</div>
<div class="t" id="t94" style="left:411.00px;top:40.88px;font-size:4.50px;color:#111;transform:translateX(-50%);">400</div>
<div class="t" id="t95" style="left:429.30px;top:40.88px;font-size:4.50px;color:#111;transform:translateX(-50%);">450</div>
<div class="t" id="t96" style="left:447.60px;top:40.88px;font-size:4.50px;color:#111;transform:translateX(-50%);">500</div>
<div class="t" id="t97" style="left:465.90px;top:40.88px;font-size:4.50px;color:#111;transform:translateX(-50%);">550</div>
<div class="t" id="t98" style="left:484.20px;top:40.88px;font-size:4.50px;color:#111;transform:translateX(-50%);">600</div>
<div class="t" id="t99" style="left:502.50px;top:40.88px;font-size:4.50px;color:#111;transform:translateX(-50%);">650</div>
<div class="t" id="t100" style="left:520.80px;top:40.88px;font-size:4.50px;color:#111;transform:translateX(-50%);">700</div>
<div class="t" id="t101" style="left:539.10px;top:40.88px;font-size:4.50px;color:#111;transform:translateX(-50%);">750</div>
<div class="t" id="t102" style="left:557.40px;top:40.88px;font-size:4.50px;color:#111;transform:translateX(-50%);">800</div>
<div class="t" id="t103" style="left:575.70px;top:40.88px;font-size:4.50px;color:#111;transform:translateX(-50%);">850</div>
<div class="t" id="t104" style="left:594.00px;top:40.88px;font-size:4.50px;color:#111;transform:translateX(-50%);">900</div>
<div class="t" id="t105" style="left:612.30px;top:40.88px;font-size:4.50px;color:#111;transform:translateX(-50%);">950</div>
<div class="t" id="t106" style="left:630.60px;top:40.88px;font-size:4.50px;color:#111;transform:translateX(-50%);">1000</div>
<div class="t" id="t107" style="left:648.90px;top:40.88px;font-size:4.50px;color:#111;transform:translateX(-50%);">1050</div>
<div class="t" id="t108" style="left:667.20px;top:40.88px;font-size:4.50px;color:#111;transform:translateX(-50%);">1100</div>
<div class="t" id="t109" style="left:685.50px;top:40.88px;font-size:4.50px;color:#111;transform:translateX(-50%);">1150</div>
<div class="t" id="t110" style="left:229.20px;top:288.31px;font-size:4.90px;color:#111;letter-spacing:-0.171px;">-78 230</div>
</div></body></html>
